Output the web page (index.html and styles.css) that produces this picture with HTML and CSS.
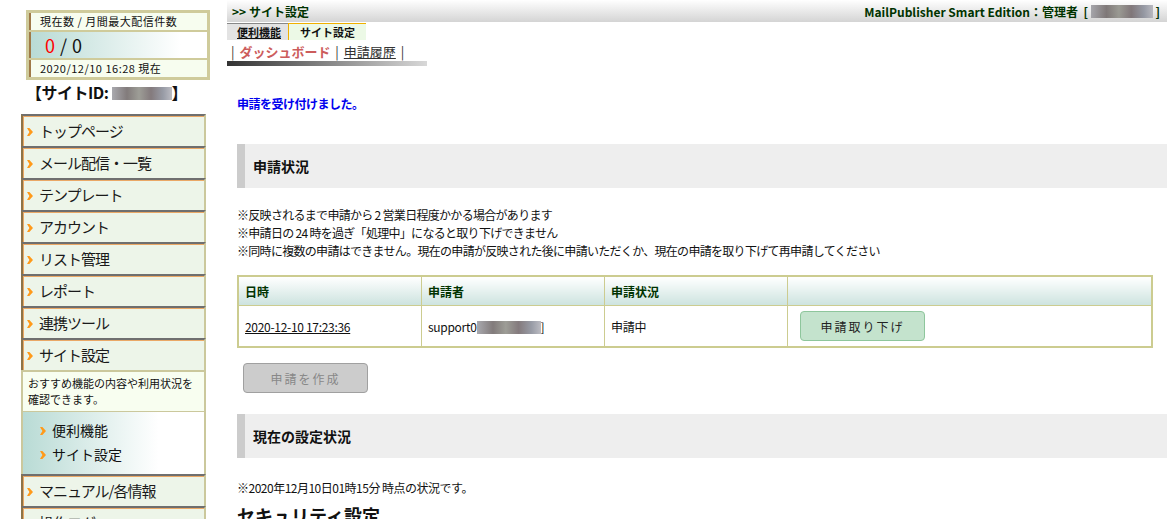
FILE: index.html
```html
<!DOCTYPE html>
<html lang="ja">
<head>
  <meta charset="UTF-8" />
  <title>サイト設定</title>
  <link rel="stylesheet" href="styles.css">
</head>
<body>
  <div class="side">
    <div class="counter">
      <div class="counter-row counter-head">現在数 / 月間最大配信件数</div>
      <div class="counter-row counter-num"><span class="red">0</span> / 0</div>
      <div class="counter-row counter-date">2020/12/10 16:28 現在</div>
    </div>
    <div class="site-id">【サイトID: <span class="blur blur-id"></span>】</div>

    <ul class="menu">
      <li class="menu-item"><span class="arrow"></span>トップページ</li>
      <li class="menu-item"><span class="arrow"></span>メール配信・一覧</li>
      <li class="menu-item"><span class="arrow"></span>テンプレート</li>
      <li class="menu-item"><span class="arrow"></span>アカウント</li>
      <li class="menu-item"><span class="arrow"></span>リスト管理</li>
      <li class="menu-item"><span class="arrow"></span>レポート</li>
      <li class="menu-item"><span class="arrow"></span>連携ツール</li>
      <li class="menu-item open"><span class="arrow"></span>サイト設定</li>
      <li class="menu-desc">おすすめ機能の内容や利用状況を確認できます。</li>
      <li class="menu-sub">
        <div class="sub-item"><span class="arrow"></span>便利機能</div>
        <div class="sub-item"><span class="arrow"></span>サイト設定</div>
      </li>
      <li class="menu-item"><span class="arrow"></span>マニュアル/各情報</li>
      <li class="menu-item"><span class="arrow"></span>操作ログ</li>
    </ul>
  </div>

  <div class="main">
    <div class="topbar">
      <span class="crumb">&gt;&gt; サイト設定</span>
      <span class="user">MailPublisher Smart Edition：管理者 &nbsp;[ <span class="blur blur-user"></span> ]</span>
    </div>

    <div class="tabs">
      <span class="tab">便利機能</span>
      <span class="tab active">サイト設定</span>
    </div>
    <div class="subnav">| <span class="current">ダッシュボード</span> | <a href="#">申請履歴</a> |</div>
    <div class="fade-bar"></div>

    <div class="content">
      <p class="notice">申請を受け付けました。</p>

      <h2 class="section">申請状況</h2>
      <ul class="notes">
        <li>※反映されるまで申請から 2 営業日程度かかる場合があります</li>
        <li>※申請日の 24 時を過ぎ「処理中」になると取り下げできません</li>
        <li>※同時に複数の申請はできません。現在の申請が反映された後に申請いただくか、現在の申請を取り下げて再申請してください</li>
      </ul>

      <table class="req">
        <thead>
          <tr><th>日時</th><th>申請者</th><th>申請状況</th><th></th></tr>
        </thead>
        <tbody>
          <tr>
            <td><a href="#">2020-12-10 17:23:36</a></td>
            <td>support0<span class="blur blur-mail"></span>]</td>
            <td>申請中</td>
            <td><button class="btn btn-cancel">申請取り下げ</button></td>
          </tr>
        </tbody>
      </table>
      <button class="btn btn-create" disabled>申請を作成</button>

      <h2 class="section section-next">現在の設定状況</h2>
      <p class="status-note">※2020年12月10日01時15分 時点の状況です。</p>
      <h3 class="sub-title">セキュリティ設定</h3>
    </div>
  </div>
</body>
</html>
```

FILE: styles.css
```css
body {
  margin: 0;
  display: flex;
  background: #fff;
  color: #111;
  font-family: "Noto Sans CJK JP", "DejaVu Sans", sans-serif;
  font-size: 12px;
  overflow: hidden;
  height: 519px;
}

/* left column */
.side {
  width: 227px;
  flex: none;
}

.counter {
  margin: 10px 0 0 26px;
  width: 184px;
  height: 70px;
  box-sizing: border-box;
  border: 3px solid #cfcb9b;
  background: #cfcb9b;
  display: flex;
  flex-direction: column;
  gap: 2px;
}

.counter-row {
  border-left: 2px solid #a07a48;
  padding-left: 9px;
  letter-spacing: 0.5px;
}

.counter-head,
.counter-date {
  height: 17px;
  line-height: 17px;
  font-size: 11px;
  background: #f7fdef;
}

.counter-num {
  flex: 1;
  font-size: 18px;
  line-height: 26px;
  padding-left: 14px;
  background: linear-gradient(to right, #b9dbd5, #ffffff 85%);
}

.red {
  color: #ff0000;
}

.site-id {
  margin: 1px 0 0 26px;
  font-size: 16px;
  font-weight: bold;
  line-height: 22px;
  letter-spacing: -0.5px;
}

.blur {
  display: inline-block;
  height: 13px;
  vertical-align: -1px;
  background: linear-gradient(to right, #9a9aa0, #6c6464 25%, #8c8c84 45%, #6e6366 65%, #868a96 85%, #b0b0b8);
  opacity: 0.85;
}

.blur-id {
  width: 60px;
}

.menu {
  list-style: none;
  margin: 11px 0 0 21px;
  padding: 0;
  width: 185px;
}

.menu-item {
  height: 30px;
  line-height: 29px;
  border-top: 2px solid #6f6f6f;
  border-left: 2px solid #8d7448;
  border-right: 2px solid #cbc89c;
  box-shadow: inset 1px 1px 0 #eaa866;
  background: #edf5e9;
  font-size: 15px;
  letter-spacing: -1px;
  padding-left: 4px;
  color: #1a1a1a;
}

.arrow {
  display: inline-block;
  width: 6px;
  height: 8px;
  margin-right: 6px;
  vertical-align: 1px;
  background: #ff9a1a;
  clip-path: polygon(0 0, 40% 0, 100% 50%, 40% 100%, 0 100%, 40% 50%);
}

.menu-desc {
  border-top: 2px solid #cbc89c;
  border-left: 2px solid #cbc89c;
  border-right: 2px solid #cbc89c;
  background: #f8fef0;
  font-size: 11px;
  line-height: 16px;
  padding: 3px 4px 0 5px;
  height: 36px;
}

.menu-sub {
  border-top: 1px solid #cbc89c;
  border-left: 2px solid #cbc89c;
  border-right: 2px solid #cbc89c;
  background: linear-gradient(to right, #b9dbd5, #ffffff 75%);
  padding: 6px 0 8px 17px;
  height: 48px;
}

.sub-item {
  font-size: 14px;
  line-height: 24px;
}

/* main column */
.main {
  flex: 1;
  min-width: 0;
}

.topbar {
  height: 22px;
  display: flex;
  justify-content: space-between;
  align-items: center;
  padding: 0 7px 0 5px;
  background: linear-gradient(#ffffff, #d4d4d4);
  color: #003300;
  font-weight: bold;
  font-size: 12px;
  white-space: nowrap;
}

.blur-user {
  width: 62px;
}

.tabs {
  display: flex;
  margin-top: 1px;
  height: 17px;
}

.tab {
  padding: 0 7px 0 10px;
  font-size: 11px;
  font-weight: bold;
  line-height: 16px;
  border-top: 1px solid #888;
  background: #e3e3e3;
  text-decoration: underline;
}

.tab.active {
  border-top: 1px solid #f0b000;
  border-left: 1px solid #f0b000;
  background: #ecf9e6;
  text-decoration: none;
  padding: 0 11px;
}

.subnav {
  padding: 3px 0 0 4px;
  font-size: 13px;
  line-height: 18px;
  color: #333;
  word-spacing: 2px;
}

.subnav .current {
  color: #cc5c5c;
  font-weight: bold;
}

.subnav a {
  color: #333;
}

.fade-bar {
  width: 200px;
  height: 5px;
  background: linear-gradient(to right, #333, #d8d8d8);
}

.content {
  padding-left: 10px;
}

.notice {
  margin: 29px 0 0;
  color: #0000ee;
  font-weight: bold;
  font-size: 12px;
  letter-spacing: -0.5px;
}

.section {
  margin: 32px 0 0;
  height: 44px;
  line-height: 44px;
  background: #eeeeee;
  border-left: 8px solid #cccccc;
  padding-left: 8px;
  font-size: 14px;
  font-weight: bold;
}

.section-next {
  margin-top: 21px;
}

.notes {
  list-style: none;
  margin: 18px 0 0;
  padding: 0;
  line-height: 18px;
  letter-spacing: -0.7px;
}

.req {
  margin-top: 15px;
  width: 916px;
  border-collapse: collapse;
  border: 2px solid #cccc90;
  table-layout: fixed;
}

.req th,
.req td {
  border: 1px solid #cccc90;
  text-align: left;
  padding: 0 6px;
  width: 170px;
}

.req th:last-child,
.req td:last-child {
  width: auto;
}

.req th {
  height: 28px;
  background: linear-gradient(#ffffff, #cde3df);
  color: #003300;
  font-weight: bold;
}

.req td {
  height: 40px;
  letter-spacing: -0.3px;
}

.req td a {
  color: #111;
}

.blur-mail {
  width: 64px;
  vertical-align: -2px;
}

.btn {
  font-family: inherit;
  font-size: 12px;
  letter-spacing: 2px;
  width: 125px;
  height: 30px;
  border-radius: 4px;
}

.btn-cancel {
  margin-left: 6px;
  background: #c4e3cd;
  border: 1px solid #8ec69c;
  color: #222;
}

.btn-create {
  display: block;
  margin: 15px 0 0 6px;
  background: #cccccc;
  border: 1px solid #a0a0a0;
  color: #888;
}

.status-note {
  margin: 0;
  padding-top: 21px;
  letter-spacing: -0.5px;
}

.sub-title {
  margin: 6px 0 0;
  font-size: 18px;
  font-weight: bold;
}
```
